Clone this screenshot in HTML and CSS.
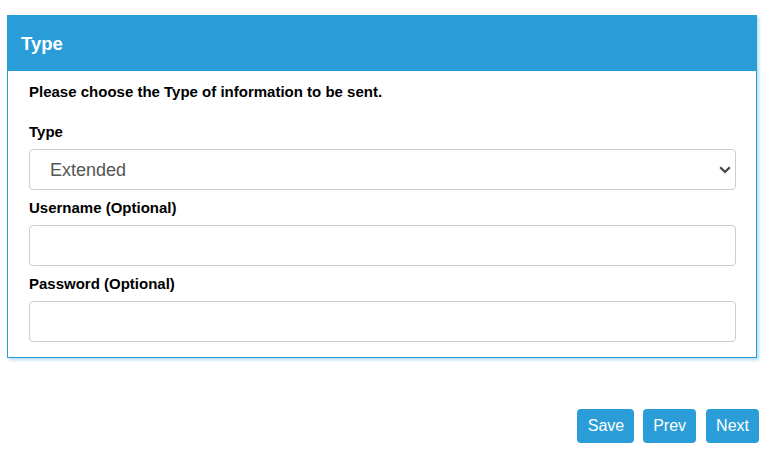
FILE: index.html
```html
<!DOCTYPE html>
<html>
<head>
<meta charset="utf-8">
<link rel="stylesheet" href="styles.css">
</head>
<body>
<div class="panel">
  <div class="panel-heading">Type</div>
  <div class="panel-body">
    <p class="intro">Please choose the Type of information to be sent.</p>
    <div class="group">
      <label class="label">Type</label>
      <div class="select-wrap">
        <select class="control select">
          <option>Extended</option>
        </select>
        <svg class="chevron" width="12" height="8" viewBox="0 0 12 8"><path d="M1.2 1.3 L6 6 L10.8 1.3" fill="none" stroke="#444" stroke-width="2.2"/></svg>
      </div>
    </div>
    <div class="group">
      <label class="label">Username (Optional)</label>
      <input class="control" type="text">
    </div>
    <div class="group last">
      <label class="label">Password (Optional)</label>
      <input class="control" type="password">
    </div>
  </div>
</div>
<div class="actions">
  <button class="btn save">Save</button>
  <button class="btn">Prev</button>
  <button class="btn next">Next</button>
</div>
</body>
</html>
```
FILE: styles.css
```css
html, body {
  margin: 0;
  padding: 0;
  background: #fff;
  font-family: "Liberation Sans", Arial, sans-serif;
  color: #000;
}
.panel {
  margin: 15px 0 0 7px;
  width: 750px;
  box-sizing: border-box;
  border: 1px solid #2a9dd8;
  box-shadow: 2px 2px 3px rgba(42, 157, 216, 0.35);
}
.panel-heading {
  background: #2a9dd8;
  color: #fff;
  font-weight: bold;
  font-size: 18.5px;
  height: 55px;
  line-height: 56px;
  padding-left: 13px;
}
.panel-body {
  padding: 11px 20px 15px 21px;
}
.intro {
  margin: 0 0 20px;
  font-size: 15px;
  font-weight: bold;
  line-height: 20px;
}
.group {
  display: flex;
  flex-direction: column;
  margin-bottom: 8px;
}
.group.last { margin-bottom: 0; }
.label {
  font-size: 15px;
  font-weight: bold;
  line-height: 20px;
  margin-bottom: 7px;
}
.select-wrap {
  position: relative;
}
.control {
  display: block;
  width: 100%;
  box-sizing: border-box;
  height: 41px;
  border: 1px solid #ccc;
  border-radius: 4px;
  background: #fff;
  font-family: "Liberation Sans", Arial, sans-serif;
  font-size: 18px;
  color: #555;
  padding: 0 20px;
  margin: 0;
  outline: none;
}
.select {
  appearance: none;
  -webkit-appearance: none;
}
.chevron {
  position: absolute;
  right: 5px;
  top: 17px;
  pointer-events: none;
}
.actions {
  display: flex;
  justify-content: flex-end;
  gap: 9px;
  margin: 51px 6px 0 0;
}
.btn {
  background: #2a9dd8;
  color: #fff;
  border: none;
  border-radius: 4px;
  height: 34px;
  padding: 0 10px;
  font-family: "Liberation Sans", Arial, sans-serif;
  font-size: 16px;
}
.btn.save {
  padding: 0 10px 0 11px;
}
.btn.next {
  margin-left: 1px;
}
```
